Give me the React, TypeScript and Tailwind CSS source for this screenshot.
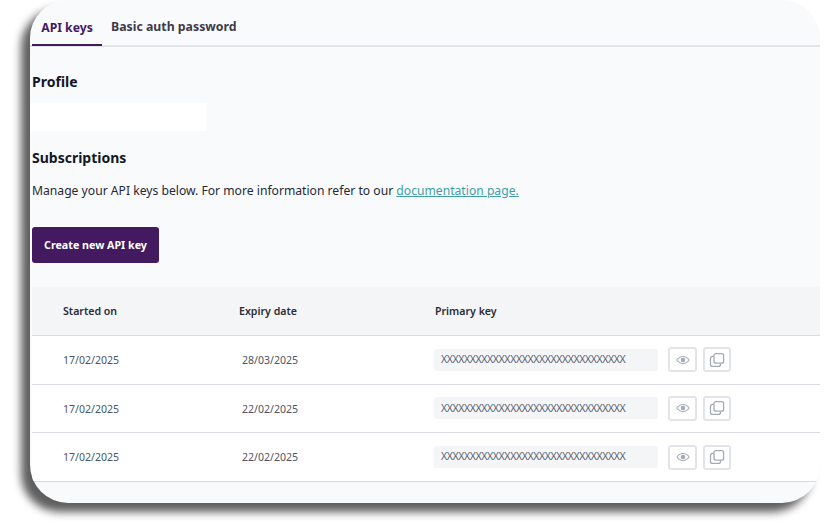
import React from 'react';

const rows = [
  { started: '17/02/2025', expiry: '28/03/2025' },
  { started: '17/02/2025', expiry: '22/02/2025' },
  { started: '17/02/2025', expiry: '22/02/2025' },
];

const KEY = 'X'.repeat(32);

const EyeIcon = () => (
  <svg width="14" height="14" viewBox="0 0 16 16" fill="none" className="text-[#a5abb5]">
    <path d="M1 8c1.8-2.6 4.2-4 7-4s5.200 1.400 7 4c-1.800 2.600-4.200 4-7 4s-5.200-1.400-7-4z" stroke="currentColor" strokeWidth="1.2" />
    <circle cx="8" cy="8" r="2.6" fill="currentColor" />
  </svg>
);

const CopyIcon = () => (
  <svg width="16" height="16" viewBox="0 0 16 16" fill="none" className="text-[#a5abb5]">
    <rect x="5" y="1.600" width="9.600" height="9.600" rx="2" stroke="currentColor" strokeWidth="1.3" />
    <path d="M5 4.400H3.500a2 2 0 0 0-2 2v6a2 2 0 0 0 2 2h6a2 2 0 0 0 2-2v-1.200" stroke="currentColor" strokeWidth="1.300" />
  </svg>
);

const App: React.FC = () => {
  return (
    <div className="w-[831px] h-[528px] bg-white overflow-hidden pl-[30px] font-['Noto_Sans',sans-serif]">
      <div className="w-[790px] h-[503px] bg-[#f9fafc] rounded-[38px] shadow-[-9px_9px_8px_#5f5f5f] overflow-hidden flex flex-col">
        {/* Tabs */}
        <div className="h-[47px] shrink-0 flex pl-[2px] border-b-2 border-[#e3e5e9]">
          <div className="h-[46px] w-[70px] pt-[12px] border-b-2 border-[#43195f] flex items-center justify-center text-[12.2px] font-bold text-[#43195f]">
            API keys
          </div>
          <div className="h-[45px] pl-[9px] pt-[10px] flex items-center text-[12.3px] font-bold text-[#3d3a4d]">
            Basic auth password
          </div>
        </div>

        <div className="pl-[2px] pt-[25px] flex flex-col flex-1">
          <h2 className="text-[14px] leading-[20px] font-bold text-[#111827]">Profile</h2>
          <div className="-ml-[2px] mt-[11px] w-[177px] h-[28px] bg-white" />
          <h2 className="mt-[17px] text-[14px] leading-[20px] font-bold text-[#111827]">Subscriptions</h2>
          <p className="mt-[13px] text-[12.15px] leading-[20px] text-[#1f2937]">
            Manage your API keys below. For more information refer to our{' '}
            <a className="text-[#3f9ea6] underline">documentation page.</a>
          </p>
          <button className="mt-[26px] w-[127px] h-[36px] rounded-[3px] bg-[#43195f] text-white text-[10.7px] font-bold">
            Create new API key
          </button>

          {/* Table */}
          <div className="mt-[24px] text-[10.55px]">
            <div className="h-[49px] pt-[2px] flex items-center bg-[#f4f5f7] border-b border-[#d9dbe1] font-semibold text-[10.6px] text-[#2b2b35]">
              <div className="w-[207px] pl-[31px]">Started on</div>
              <div className="w-[196px]">Expiry date</div>
              <div>Primary key</div>
            </div>
            {rows.map((row, i) => (
              <div key={i} className="h-[48.67px] flex items-center bg-white border-b border-[#d9dbe1] text-[#4b5563]">
                <div className="w-[210px] pl-[31px] pt-[2px]">{row.started}</div>
                <div className="w-[192px] pt-[2px]">{row.expiry}</div>
                <div className="w-[224px] h-[22px] bg-[#f4f5f7] rounded-[2px] pl-[7px] flex items-center text-[#5b6270] tracking-[-0.42px]">
                  {KEY}
                </div>
                <button className="ml-[10px] w-[29px] h-[25px] flex items-center justify-center rounded-[3px] border-2 border-[#e2e4e8] bg-white">
                  <EyeIcon />
                </button>
                <button className="ml-[6px] w-[28px] h-[25px] flex items-center justify-center rounded-[3px] border-2 border-[#e2e4e8] bg-white">
                  <CopyIcon />
                </button>
              </div>
            ))}
          </div>
        </div>
      </div>
    </div>
  );
};

export default App;
